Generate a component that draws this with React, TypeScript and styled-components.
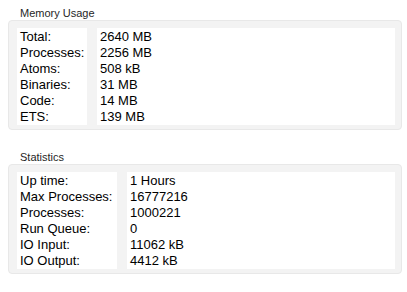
import React from "react";
import styled, { createGlobalStyle } from "styled-components";

const GlobalStyle = createGlobalStyle`
  html, body {
    margin: 0;
    padding: 0;
    background: #ffffff;
  }
  body {
    font-family: "Liberation Sans", Arial, Helvetica, sans-serif;
  }
`;

const Page = styled.div`
  width: 407px;
  height: 292px;
  box-sizing: border-box;
  padding: 0 5px 0 8px;
  display: flex;
  flex-direction: column;
`;

const Section = styled.section<{ $first?: boolean }>`
  display: flex;
  flex-direction: column;
  margin-top: ${(p) => (p.$first ? "6px" : "20px")};
`;

const Title = styled.div`
  font-size: 11px;
  line-height: 14px;
  color: #262626;
  padding-left: 12px;
`;

const GroupBox = styled.div<{ $labelWidth: number }>`
  display: grid;
  grid-template-columns: ${(p) => p.$labelWidth}px 1fr;
  column-gap: 10px;
  background: #f3f3f3;
  border: 1px solid #e8e8e8;
  border-radius: 4px;
  padding: 7px 6px 4px 8px;
`;

const Column = styled.div`
  background: #ffffff;
  padding: 1px 3px 0 3px;
  display: flex;
  flex-direction: column;
`;

const Cell = styled.div`
  font-size: 13px;
  line-height: 16px;
  height: 16px;
  color: #000000;
  white-space: nowrap;
`;

type Item = [string, string];

const memory: Item[] = [
  ["Total:", "2640 MB"],
  ["Processes:", "2256 MB"],
  ["Atoms:", "508 kB"],
  ["Binaries:", "31 MB"],
  ["Code:", "14 MB"],
  ["ETS:", "139 MB"],
];

const stats: Item[] = [
  ["Up time:", "1 Hours"],
  ["Max Processes:", "16777216"],
  ["Processes:", "1000221"],
  ["Run Queue:", "0"],
  ["IO Input:", "11062 kB"],
  ["IO Output:", "4412 kB"],
];

function Group({
  title,
  items,
  labelWidth,
  first,
}: {
  title: string;
  items: Item[];
  labelWidth: number;
  first?: boolean;
}) {
  return (
    <Section $first={first}>
      <Title>{title}</Title>
      <GroupBox $labelWidth={labelWidth}>
        <Column>
          {items.map(([k]) => (
            <Cell key={k}>{k}</Cell>
          ))}
        </Column>
        <Column>
          {items.map(([k, v]) => (
            <Cell key={k}>{v}</Cell>
          ))}
        </Column>
      </GroupBox>
    </Section>
  );
}

export default function App() {
  return (
    <>
      <GlobalStyle />
      <Page>
        <Group title="Memory Usage" items={memory} labelWidth={70} first />
        <Group title="Statistics" items={stats} labelWidth={100} />
      </Page>
    </>
  );
}
